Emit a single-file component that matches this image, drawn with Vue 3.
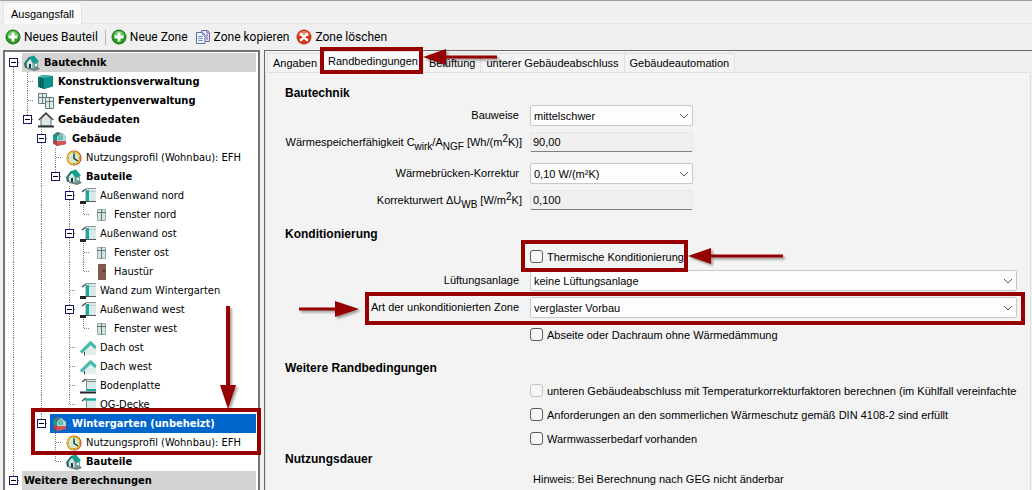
<script setup>
import { ref } from 'vue'

const tabs = ['Angaben', 'Randbedingungen', 'Belüftung', 'unterer Gebäudeabschluss', 'Gebäudeautomation']
const activeTab = ref('Randbedingungen')

// Guide letters, one per indent column:
// F first node, E expander with siblings below, Z last expander,
// T leaf, L last leaf, | line passing through, . empty
const rows = [
  { g: 'F', icon: 'house', text: 'Bautechnik', bold: true, group: true },
  { g: '|T', icon: 'book', text: 'Konstruktionsverwaltung', bold: true },
  { g: '|T', icon: 'windows', text: 'Fenstertypenverwaltung', bold: true },
  { g: '|Z', icon: 'outline', text: 'Gebäudedaten', bold: true },
  { g: '|.E', icon: 'zone', text: 'Gebäude', bold: true },
  { g: '|.|T', icon: 'clock', text: 'Nutzungsprofil (Wohnbau): EFH' },
  { g: '|.|Z', icon: 'house', text: 'Bauteile', bold: true },
  { g: '|.|.E', icon: 'wall', text: 'Außenwand nord' },
  { g: '|.|.|L', icon: 'window', text: 'Fenster nord' },
  { g: '|.|.E', icon: 'wall', text: 'Außenwand ost' },
  { g: '|.|.|T', icon: 'window', text: 'Fenster ost' },
  { g: '|.|.|L', icon: 'door', text: 'Haustür' },
  { g: '|.|.T', icon: 'wall', text: 'Wand zum Wintergarten' },
  { g: '|.|.E', icon: 'wall', text: 'Außenwand west' },
  { g: '|.|.|L', icon: 'window', text: 'Fenster west' },
  { g: '|.|.T', icon: 'roof', text: 'Dach ost' },
  { g: '|.|.T', icon: 'roof', text: 'Dach west' },
  { g: '|.|.T', icon: 'floor', text: 'Bodenplatte' },
  { g: '|.|.L', icon: 'ceiling', text: 'OG-Decke' },
  { g: '|.Z', icon: 'zone', text: 'Wintergarten (unbeheizt)', bold: true, selected: true },
  { g: '|..T', icon: 'clock', text: 'Nutzungsprofil (Wohnbau): EFH' },
  { g: '|..L', icon: 'house', text: 'Bauteile', bold: true },
  { g: 'Z', icon: '', text: 'Weitere Berechnungen', bold: true, group: true },
]
const lineTop = (c) => (c === 'F' ? 10 : 0)
const lineEnd = (c) => ('LZ'.includes(c) ? 10 : 19)
const isExpander = (c) => 'FEZ'.includes(c)
</script>

<template>
  <div class="page">
    <nav class="case-tabs"><button class="case-tab" type="button">Ausgangsfall</button></nav>

    <div class="toolbar">
      <button type="button" class="tool">
        <svg class="ico" viewBox="0 0 16 16"><circle cx="8" cy="8" r="7" fill="#259b1e" stroke="#177312" /><path d="M2.500 7a5.500 5 0 0 1 11 0Z" fill="#67c75b" /><path d="M6.500 3.500h3v3h3v3h-3v3h-3v-3h-3v-3h3Z" fill="#fff" /></svg>
        Neues Bauteil
      </button>
      <span class="sep"></span>
      <button type="button" class="tool">
        <svg class="ico" viewBox="0 0 16 16"><circle cx="8" cy="8" r="7" fill="#259b1e" stroke="#177312" /><path d="M2.500 7a5.500 5 0 0 1 11 0Z" fill="#67c75b" /><path d="M6.500 3.500h3v3h3v3h-3v3h-3v-3h-3v-3h3Z" fill="#fff" /></svg>
        Neue Zone
      </button>
      <button type="button" class="tool">
        <svg class="ico" viewBox="0 0 16 16"><path d="M6.500 1.500h6l2 2v9h-8Z" fill="#e6e2f6" stroke="#7766ad" /><path d="M12 1.500v2.500h2.500M11 6h2M11 8h2M11 10h2" fill="none" stroke="#7766ad" /><path d="M1.500 3.500h6l2.500 2.500v8.500h-8.500Z" fill="#f1f6fc" stroke="#54719f" /><path d="M7.500 3.500v2.500h2.500M3 7.500h5M3 9.500h5M3 11.500h5" fill="none" stroke="#7c9bc8" /></svg>
        Zone kopieren
      </button>
      <button type="button" class="tool">
        <svg class="ico" viewBox="0 0 16 16"><circle cx="8" cy="8" r="7" fill="#dc3515" stroke="#b32a12" /><path d="M2.500 7a5.500 5 0 0 1 11 0Z" fill="#f07a5c" /><path d="m5 5 6 6m0-6-6 6" stroke="#fff" stroke-width="2.600" stroke-linecap="round" /></svg>
        Zone löschen
      </button>
    </div>

    <div class="main">
      <ul class="tree" role="tree">
        <li v-for="(row, i) in rows" :key="i" class="row" role="treeitem" :aria-selected="!!row.selected">
          <svg v-for="(c, k) in row.g" :key="k" class="guide" viewBox="0 0 14 19" shape-rendering="crispEdges">
            <template v-if="c !== '.'">
              <path :d="`M7.500 ${lineTop(c)}V${lineEnd(c)}`" stroke="#808080" stroke-dasharray="1 1" />
              <path v-if="c !== '|'" d="M8 9.500h6" stroke="#808080" stroke-dasharray="1 1" />
            </template>
            <template v-if="isExpander(c)">
              <rect x="3.500" y="5.500" width="8" height="8" fill="#fff" stroke="#16166b" />
              <path d="M5 9.500h5" stroke="#000" />
            </template>
          </svg>
          <span class="node" :class="{ bold: row.bold, group: row.group, selected: row.selected }">
            <svg v-if="row.icon" class="ico" viewBox="0 0 16 16">
              <g v-if="row.icon === 'house'">
                <path d="M3 12h11l2 2-5 2-8-2Z" fill="#6f8580" />
                <path d="M0 8h3v5H1Z" fill="#35625d" />
                <path d="m2 7 4-4 3 5v6l-6-1Z" fill="#cfe6e2" stroke="#47706b" stroke-width=".6" />
                <path d="m9 8 5-2v6l-5 2Z" fill="#79a7a1" />
                <path d="m5 2 5-1.500 5 6-5.500 2Z" fill="#139c90" />
                <path d="m.5 7.500 4.500-5.500 1.500 1-4.500 5.500Z" fill="#0d6f67" />
                <path d="M5 9h2v4.500l-2-.5Z" fill="#173f3c" />
                <path d="M11 9h2v2h-2Z" fill="#e9f8f5" />
              </g>
              <g v-else-if="row.icon === 'book'">
                <path d="m0 3 5-2 10 1v10l-9 3-6-2Z" fill="#07766f" />
                <path d="m6 4 9-2v10.500l-9 2.500Z" fill="#0b9187" />
                <path d="m0 3 5-2 10 1-9 2Z" fill="#3eb5aa" />
                <path d="M2.500 3.500v10M4.500 4v10.500" stroke="#035049" stroke-width=".8" />
              </g>
              <g v-else-if="row.icon === 'windows'" stroke="#697878" fill="#dcefed">
                <path d="M.5.500h8v10h-8ZM4.500.500v10M.5 4.500h8" />
                <path d="M7.500 4.500h8v11h-8ZM11.500 4.500v11M7.500 8.500h8" />
              </g>
              <g v-else-if="row.icon === 'outline'">
                <path d="M3 7v7h10V7L8 2Z" fill="#dce7e5" stroke="#666" />
                <path d="M.7 8 8 1l7.300 7" fill="none" stroke="#444" stroke-width="1.300" />
                <path d="M0 14.500h16" stroke="#333" stroke-width="2" />
              </g>
              <g v-else-if="row.icon === 'zone'">
                <path d="m1 4 4-3 5 1 4 4v7l-9 2-4-3Z" fill="#467e79" />
                <path d="m1 4 4 2v9l-4-3Z" fill="#139b8e" />
                <path d="m5 6 4-4 5 4v4H5Z" fill="#b7d9d5" />
                <path d="m6 6 3-3 2 2v4H6Z" fill="#65bcb0" />
                <path d="M5 10h9v3l-9 2Z" fill="#d25454" />
                <path d="m1 9 4 1v5l-4-3Z" fill="#b83c47" />
              </g>
              <g v-else-if="row.icon === 'clock'">
                <circle cx="8" cy="8" r="7.500" fill="#c5252c" />
                <circle cx="7.700" cy="8" r="6.200" fill="#d3e8d3" stroke="#e3c51c" stroke-width="1.500" />
                <path d="M8 3.500v5l4 2.500" fill="none" stroke="#171d1d" stroke-width="1.300" />
                <path d="M8 2v1M8 13v1M2 8h1M13 8h1" stroke="#58625e" />
              </g>
              <g v-else-if="row.icon === 'wall'">
                <path d="M8 1h8v12H8Z" fill="#d8eae9" />
                <path d="M6 2h3v11H6Z" fill="#18a99d" />
                <path d="M5.500 3v10M9 3.500h7" stroke="#bacac9" fill="none" />
                <path d="m2 4 4-3" fill="none" stroke="#454b4b" stroke-width="1.500" />
                <path d="M6 .500h10" stroke="#8b9696" />
                <path d="M0 14.500h6" stroke="#252525" stroke-width="3" />
                <path d="M6 13.500h10" stroke="#4f5a5a" />
              </g>
              <g v-else-if="row.icon === 'window'">
                <path d="M3.500 2.500h8v11h-8Z" fill="#cfe5e3" stroke="#9aa8a8" />
                <path d="M7.500 2v12M3 5.500h9" stroke="#667675" />
              </g>
              <g v-else-if="row.icon === 'door'">
                <path d="M4 0h8v16H4Z" fill="#835b4e" />
                <path d="M10 6v2" stroke="#3a2520" stroke-width="1.500" />
              </g>
              <g v-else-if="row.icon === 'roof'">
                <path d="M4 10 10 4l6 5v6H4Z" fill="#e2efed" />
                <path d="M1 12.500 10.500 3l5.500 5" fill="none" stroke="#a3b5b3" stroke-width="3.600" />
                <path d="M1 12.500 10.500 3l5.500 5" fill="none" stroke="#2fc0b4" stroke-width="2.200" />
                <path d="M4.500 12v3.500" stroke="#444" />
              </g>
              <g v-else-if="row.icon === 'floor'">
                <path d="M7 2h9v9H7Z" fill="#d8eae9" />
                <path d="m2 4 4-3" fill="none" stroke="#454b4b" stroke-width="1.500" />
                <path d="M6 1.500h10M6.500 2v9M7 3.500h9" fill="none" stroke="#7f8b8b" />
                <path d="M6 12h10" stroke="#1aaba0" stroke-width="2" />
                <path d="M0 14.500h16" stroke="#252525" stroke-width="2" />
              </g>
              <g v-else>
                <path d="M7 4h9v10H7Z" fill="#d8eae9" />
                <path d="m2 4 4-3" fill="none" stroke="#454b4b" stroke-width="1.500" />
                <path d="M5 2.500h11" stroke="#1aaba0" stroke-width="2.500" />
                <path d="M6.500 4v10" stroke="#7f8b8b" />
              </g>
            </svg>
            {{ row.text }}
          </span>
        </li>
      </ul>

      <section class="panel">
        <nav class="tabs" role="tablist">
          <button
            v-for="t in tabs" :key="t" type="button" role="tab" class="tab"
            :class="{ active: t === activeTab }" :aria-selected="t === activeTab" @click="activeTab = t"
          >{{ t }}</button>
        </nav>

        <form class="form" @submit.prevent>
          <h2>Bautechnik</h2>
          <div class="field">
            <label for="bauweise">Bauweise</label>
            <span class="combo short">
              <select id="bauweise"><option>mittelschwer</option></select>
              <svg class="chev" viewBox="0 0 10 6"><path d="m1 1 4 4 4-4" /></svg>
            </span>
          </div>
          <div class="field">
            <label for="cwirk" class="unit">Wärmespeicherfähigkeit C<sub>wirk</sub>/A<sub>NGF</sub> [Wh/(m<sup>2</sup>K)]</label>
            <input id="cwirk" class="text short" type="text" value="90,00" readonly>
          </div>
          <div class="field second">
            <label for="wbk">Wärmebrücken-Korrektur</label>
            <span class="combo short">
              <select id="wbk"><option>0,10 W/(m²K)</option></select>
              <svg class="chev" viewBox="0 0 10 6"><path d="m1 1 4 4 4-4" /></svg>
            </span>
          </div>
          <div class="field">
            <label for="uwb" class="unit">Korrekturwert ΔU<sub>WB</sub> [W/m<sup>2</sup>K]</label>
            <input id="uwb" class="text short" type="text" value="0,100" readonly>
          </div>

          <h2>Konditionierung</h2>
          <label class="check"><input type="checkbox"><span>Thermische Konditionierung</span></label>
          <div class="field tight">
            <label for="lueftung">Lüftungsanlage</label>
            <span class="combo">
              <select id="lueftung"><option>keine Lüftungsanlage</option></select>
              <svg class="chev" viewBox="0 0 10 6"><path d="m1 1 4 4 4-4" /></svg>
            </span>
          </div>
          <div class="field">
            <label for="zone">Art der unkonditionierten Zone</label>
            <span class="combo">
              <select id="zone"><option>verglaster Vorbau</option></select>
              <svg class="chev" viewBox="0 0 10 6"><path d="m1 1 4 4 4-4" /></svg>
            </span>
          </div>
          <label class="check"><input type="checkbox"><span>Abseite oder Dachraum ohne Wärmedämmung</span></label>

          <h2>Weitere Randbedingungen</h2>
          <label class="check"><input type="checkbox" disabled><span>unteren Gebäudeabschluss mit Temperaturkorrekturfaktoren berechnen (im Kühlfall vereinfachter An</span></label>
          <label class="check tight"><input type="checkbox"><span>Anforderungen an den sommerlichen Wärmeschutz gemäß DIN 4108-2 sind erfüllt</span></label>
          <label class="check tight"><input type="checkbox"><span>Warmwasserbedarf vorhanden</span></label>

          <h2 class="close">Nutzungsdauer</h2>
          <p class="note">Hinweis: Bei Berechnung nach GEG nicht änderbar</p>
        </form>
      </section>
    </div>

    <div class="mark mark-tab"></div>
    <div class="mark mark-node"></div>
    <div class="mark mark-check"></div>
    <div class="mark mark-zone"></div>
    <svg class="arrow arrow-tab" viewBox="0 0 74 16"><path d="M0 8 23 0v6.500h51v3H23V16Z" /></svg>
    <svg class="arrow arrow-check" viewBox="0 0 95 16"><path d="M0 8 23 0v6.500h72v3H23V16Z" /></svg>
    <svg class="arrow arrow-zone" viewBox="0 0 60 16"><path d="M60 8 36 0v6.500H0v3h36V16Z" /></svg>
    <svg class="arrow arrow-node" viewBox="0 0 16 103"><path d="M8 103 0 79h6V0h4v79h6Z" /></svg>
  </div>
</template>

<style>
html, body { margin: 0; background: #f0f0f0; }
</style>

<style scoped>
* { box-sizing: border-box; }
.page {
  position: relative;
  display: flex;
  flex-direction: column;
  height: 100vh;
  overflow: hidden;
  border-top: 1px solid #a0a0a0;
  background: #f0f0f0;
  color: #000;
  font: 11px/16px "Liberation Sans", Arial, sans-serif;
}
button {
  margin: 0;
  border: 0;
  padding: 0;
  background: none;
  color: inherit;
  font: inherit;
  white-space: nowrap;
}
.case-tabs {
  display: flex;
  height: 23px;
  flex: none;
  padding: 1px 3px 0;
  border-bottom: 1px solid #e3e3e3;
}
.case-tab {
  height: 22px;
  padding: 0 7px;
  background: #f9f9f9;
  border: 1px solid #e3e3e3;
  border-bottom: 0;
}
.toolbar {
  display: flex;
  align-items: center;
  flex: none;
  height: 26px;
  padding-left: 5px;
  font: 12px/18px Roboto, sans-serif;
}
.tool { display: flex; align-items: center; gap: 3px; margin-right: 7px; }
.sep { width: 1px; height: 15px; margin-right: 5px; background: #b4b4b4; }
.ico { flex: none; width: 16px; height: 16px; }

.main { display: flex; flex: 1; min-height: 0; gap: 4px; padding-left: 3px; }
.tree {
  flex: none;
  width: 257px;
  margin: 0;
  padding: 1px 2px 0 1px;
  list-style: none;
  overflow: hidden;
  border: 2px solid #73737a;
  border-bottom: 0;
  background: #fff;
  font: 11px/18px "DejaVu Sans Condensed", "DejaVu Sans", sans-serif;
}
.row { display: flex; height: 19px; }
.guide { flex: none; width: 14px; height: 19px; }
.node {
  display: flex;
  align-items: center;
  flex: 1;
  min-width: 0;
  gap: 4px;
  margin-left: 2px;
  padding-left: 2px;
  white-space: nowrap;
}
.bold { font-weight: bold; }
.group { background: #d3d3d3; }
.selected { background: #0066cc; color: #fff; }

.panel {
  display: flex;
  flex-direction: column;
  flex: 1;
  min-width: 0;
  border-top: 1px solid #696969;
  border-left: 1px solid #696969;
}
.tabs { display: flex; align-items: flex-end; flex: none; height: 21px; padding-left: 2px; }
.tab {
  height: 19px;
  padding: 0 5px;
  border: 1px solid #e0e0e0;
  border-bottom: 0;
  border-left-width: 0;
  background: #f3f3f3;
}
.tab:first-child { border-left-width: 1px; }
.tab.active { height: 21px; padding-bottom: 3px; background: #fafafa; }
.form {
  flex: 1;
  min-height: 0;
  margin-right: 1px;
  padding: 10px 13px 0 19px;
  overflow: hidden;
  border: 1px solid #e0e0e0;
  border-bottom: 0;
  background: #f3f3f3;
}
h2 { margin: 13px 0 2px; font-size: 12px; line-height: 20px; font-weight: bold; }
h2:first-child { margin-top: 0; }
h2.close { margin: 0; }
.field { display: grid; grid-template-columns: 237px minmax(0, 1fr); column-gap: 8px; height: 21px; margin-top: 6px; }
h2 + .field { margin-top: 0; }
.field.second { margin-top: 10px; }
.field.tight { margin-top: 3px; }
.field label { padding-right: 3px; text-align: right; line-height: 20px; white-space: nowrap; }
.field label.unit { padding-right: 0; }
sub, sup { font-size: 10px; line-height: 0; }
sub { vertical-align: -4px; }
sup { vertical-align: 4px; }
.combo { display: grid; align-items: center; }
.combo > * { grid-area: 1 / 1; }
.short { width: 163px; }
select, .text { min-width: 0; margin: 0; color: #000; font: inherit; border-radius: 2px; }
select {
  appearance: none;
  width: 100%;
  height: 21px;
  padding: 0 20px 0 3px;
  border: 1px solid #c8c8c8;
  background: #fdfdfd;
}
.chev { justify-self: end; width: 10px; height: 6px; margin-right: 4px; fill: none; stroke: #555; pointer-events: none; }
.text {
  height: 20px;
  padding: 0 2px;
  border: 1px solid #e6e6e6;
  border-bottom-color: #808080;
  background: #f0f0f0;
}
.check { display: flex; align-items: center; height: 21px; margin: 6px 0 0 245px; overflow: hidden; white-space: nowrap; }
h2 + .check { margin-top: 0; }
.check.tight { margin-top: 3px; }
.check input {
  appearance: none;
  flex: none;
  width: 13px;
  height: 13px;
  margin: 0 4px 0 0;
  border: 1px solid #5c5c5c;
  border-radius: 3px;
  background: #f6f6f6;
}
.check span { line-height: 20px; }
.check input:disabled { border-color: #c4c4c4; }
.note { margin: 0 0 0 248px; line-height: 20px; }

.mark { position: absolute; border: 4px solid #960000; pointer-events: none; }
.mark-tab { left: 320px; top: 46px; width: 103px; height: 27px; }
.mark-node { left: 31px; top: 407px; width: 230px; height: 47px; }
.mark-check { left: 521px; top: 239px; width: 167px; height: 32px; }
.mark-zone { left: 365px; right: 7px; top: 291px; height: 33px; }
.arrow { position: absolute; overflow: visible; fill: #960000; filter: drop-shadow(2px 2px 1px rgba(0, 0, 0, .35)); pointer-events: none; }
.arrow-tab { left: 423px; top: 48px; width: 74px; height: 16px; }
.arrow-check { left: 688px; top: 247px; width: 95px; height: 16px; }
.arrow-zone { left: 299px; top: 300px; width: 60px; height: 16px; }
.arrow-node { left: 220px; top: 305px; width: 16px; height: 103px; }
</style>
